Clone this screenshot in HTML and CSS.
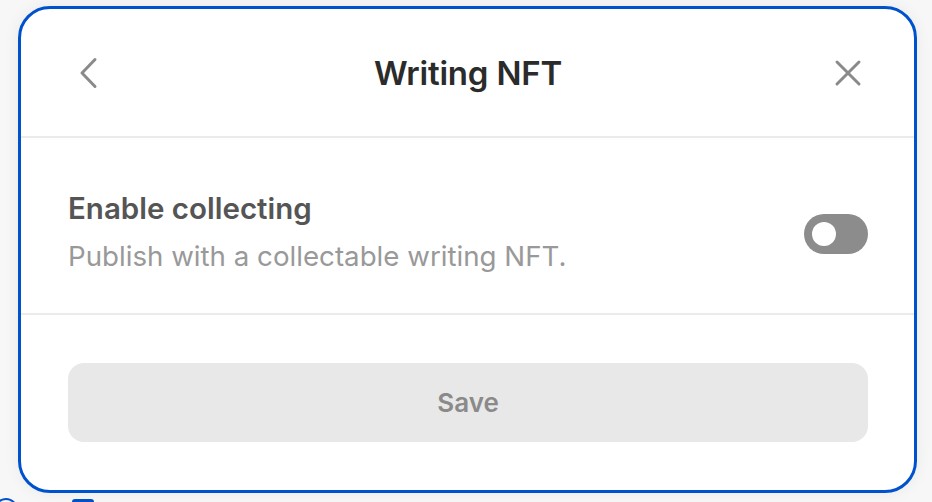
FILE: index.html
```html
<!DOCTYPE html>
<html lang="en">
<head>
    <meta charset="UTF-8">
    <meta name="viewport" content="width=device-width, initial-scale=1.0">
    <title>Writing NFT</title>
    <link rel="stylesheet" href="styles.css">
</head>
<body>
    <div class="backdrop-bits">
        <span class="bit-curve"></span>
        <span class="bit-bar"></span>
    </div>

    <div class="modal">
        <div class="modal-header">
            <button class="icon-button" aria-label="Back">
                <svg width="40" height="40" viewBox="0 0 40 40">
                    <path d="M27 6.5 L14 20 L27 33.5" fill="none" stroke="#8a8a8a" stroke-width="3" stroke-linecap="round" stroke-linejoin="round"/>
                </svg>
            </button>
            <h1 class="modal-title">Writing NFT</h1>
            <button class="icon-button" aria-label="Close">
                <svg width="40" height="40" viewBox="0 0 40 40">
                    <path d="M9 9 L31 31 M31 9 L9 31" fill="none" stroke="#8a8a8a" stroke-width="3" stroke-linecap="round"/>
                </svg>
            </button>
        </div>

        <div class="modal-section">
            <div class="setting-text">
                <div class="setting-title">Enable collecting</div>
                <div class="setting-desc">Publish with a collectable writing NFT.</div>
            </div>
            <label class="toggle">
                <input type="checkbox" />
                <span class="toggle-knob"></span>
            </label>
        </div>

        <div class="modal-footer">
            <button class="save-button" disabled>Save</button>
        </div>
    </div>
</body>
</html>
```

FILE: styles.css
```css
body {
    margin: 0;
    padding: 6px 0 0 18px;
    background-color: #f7f7f7;
    font-family: Inter, "Noto Sans", sans-serif;
    overflow: hidden;
    height: 502px;
    box-sizing: border-box;
    position: relative;
}
.backdrop-bits {
    position: absolute;
    left: 0;
    top: 494px;
    width: 200px;
    height: 8px;
}
.bit-curve {
    position: absolute;
    left: -6px;
    top: 4px;
    width: 20px;
    height: 20px;
    border: 2px solid #0052cc;
    border-radius: 50%;
}
.bit-bar {
    position: absolute;
    left: 72px;
    top: 5px;
    width: 22px;
    height: 6px;
    background-color: #0052cc;
    border-radius: 3px 3px 0 0;
}
.modal {
    width: 899px;
    height: 487px;
    box-sizing: border-box;
    background-color: #fff;
    border: 3px solid #0052cc;
    border-radius: 32px;
    box-shadow: 0 0 16px rgba(0, 0, 0, 0.06);
    display: flex;
    flex-direction: column;
    position: relative;
}
.modal-header {
    height: 127px;
    padding: 0 46px 0 47px;
    display: flex;
    align-items: center;
    justify-content: space-between;
    border-bottom: 2px solid #ebebeb;
}
.icon-button {
    width: 40px;
    height: 40px;
    padding: 0;
    border: none;
    background: none;
    cursor: pointer;
    display: flex;
}
.modal-title {
    margin: 0;
    font-size: 33px;
    font-weight: 600;
    color: #2b2b2b;
    letter-spacing: -0.2px;
}
.modal-section {
    height: 175px;
    padding: 0 46px 0 47px;
    display: flex;
    align-items: center;
    justify-content: space-between;
    border-bottom: 2px solid #ebebeb;
}
.setting-text {
    display: flex;
    flex-direction: column;
    gap: 12px;
    margin-top: 12px;
}
.setting-title {
    font-size: 29.5px;
    line-height: 36px;
    font-weight: 600;
    color: #555;
}
.setting-desc {
    font-size: 27.7px;
    line-height: 36px;
    color: #999;
}
.toggle {
    width: 64px;
    height: 40px;
    border-radius: 20px;
    background-color: #8c8c8c;
    position: relative;
    margin-top: 16px;
    cursor: pointer;
}
.toggle input {
    display: none;
}
.toggle-knob {
    position: absolute;
    left: 8px;
    top: 8px;
    width: 24px;
    height: 24px;
    border-radius: 50%;
    background-color: #fff;
}
.modal-footer {
    flex: 1;
    padding: 0 46px 0 47px;
    display: flex;
    align-items: center;
}
.save-button {
    width: 100%;
    height: 79px;
    border: none;
    border-radius: 16px;
    background-color: #e8e8e8;
    color: #8a8a8a;
    font-family: Inter, "Noto Sans", sans-serif;
    font-size: 26px;
    font-weight: 600;
}
```
